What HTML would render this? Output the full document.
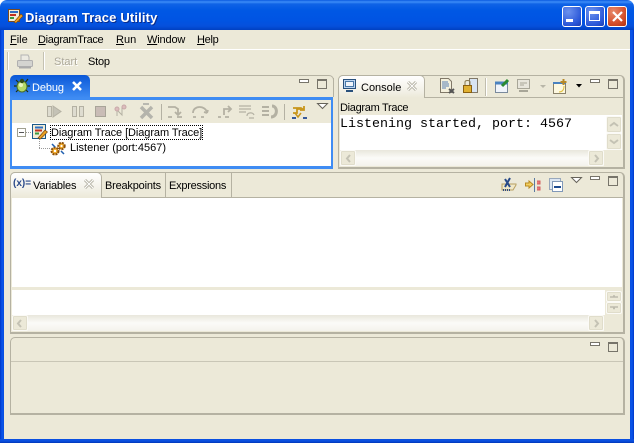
<!DOCTYPE html>
<html><head><meta charset="utf-8"><style>
html,body{margin:0;padding:0}
body{width:634px;height:443px;overflow:hidden;background:#fff;position:relative;font:11px/13px "Liberation Sans",sans-serif;color:#000}
.a,.t{position:absolute}
.t{white-space:nowrap}
u{text-decoration:underline}
.panel{position:absolute;border:2px solid #aca899;border-top-width:1px;border-left-width:1px;box-sizing:border-box;border-radius:5px 5px 0 0;border-color:#b5b2a2;background:#ece9d8}
.w{position:absolute;background:#fff}
.btn{position:absolute;box-sizing:border-box;background:#ece9d8;border:1px solid #fbfaf6;border-radius:2px;box-shadow:0 0 0 1px #e0ddcb inset}
.hs{position:absolute;background:linear-gradient(#e9e7dc,#fbfbf8 50%,#f4f3ec)}
svg{position:absolute;overflow:visible}
.min{position:absolute;width:8px;height:2px;border:1px solid #77746a;background:#fff}
.max{position:absolute;width:8px;height:7px;border:1px solid #77746a;border-top-width:2px}
</style></head><body>
<div class="a" style="left:0;top:30px;width:634px;height:413px;background:#ece9d8"></div>
<!-- window frame -->
<div class="a" style="left:0;top:0;width:634px;height:30px;border-radius:7px 7px 0 0;background:linear-gradient(#0a5ae0 0,#3c8cf8 2px,#0f63e6 4px,#0058e4 10px,#0054e3 20px,#0550dc 26px,#0140c0 30px)"></div>
<div class="a" style="left:0;top:30px;width:4px;height:413px;background:linear-gradient(90deg,#0036c8,#0a55ea 50%,#0a4fe0)"></div>
<div class="a" style="left:630px;top:30px;width:4px;height:413px;background:linear-gradient(90deg,#0a4fe0,#0a55ea 50%,#0036c8)"></div>
<div class="a" style="left:0;top:439px;width:634px;height:4px;background:linear-gradient(#0a4fe0,#0a50e0 50%,#0036b8)"></div>
<div class="t" style="left:25px;top:10px;font:bold 13px/16px 'Liberation Sans',sans-serif;color:#fff;text-shadow:1px 1px 0 #0a2c8c;letter-spacing:.15px">Diagram Trace Utility</div>
<svg style="left:7px;top:8px" width="16" height="16"><rect x="1.5" y="1.5" width="11" height="12" fill="#f3ecd6" stroke="#7a4a20"/><path d="M3 4h8" stroke="#2e6fc0" stroke-width="2"/><path d="M3 7h6" stroke="#c03020" stroke-width="2"/><path d="M3 10h4" stroke="#3a9a40" stroke-width="2"/><path d="M7 14l7-8 2 2-7 7z" fill="#f0a020" stroke="#7a4a10" stroke-width=".6"/></svg>
<!-- caption buttons -->
<div class="a" style="left:562px;top:6px;width:18px;height:19px;border:1px solid #fff;border-radius:3px;background:radial-gradient(circle at 30% 25%,#6c92ee,#2a57d8 70%,#1c3cb0)"><div class="a" style="left:3px;top:12px;width:7px;height:3px;background:#fff"></div></div>
<div class="a" style="left:585px;top:6px;width:18px;height:19px;border:1px solid #fff;border-radius:3px;background:radial-gradient(circle at 30% 25%,#6c92ee,#2a57d8 70%,#1c3cb0)"><div class="a" style="left:3px;top:4px;width:9px;height:6px;border:1px solid #fff;border-top-width:3px"></div></div>
<div class="a" style="left:607px;top:6px;width:18px;height:19px;border:1px solid #fff;border-radius:3px;background:radial-gradient(circle at 30% 25%,#e88a6c,#d4502c 60%,#b03010)"><svg style="left:4px;top:4px" width="11" height="11"><path d="M1 1l9 9M10 1l-9 9" stroke="#fff" stroke-width="2.2"/></svg></div>
<!-- menu -->
<div class="t" style="left:10px;top:34px"><u>F</u>ile</div>
<div class="t" style="left:38px;top:34px;letter-spacing:-.33px"><u>D</u>iagramTrace</div>
<div class="t" style="left:116px;top:34px"><u>R</u>un</div>
<div class="t" style="left:147px;top:34px;letter-spacing:-.15px"><u>W</u>indow</div>
<div class="t" style="left:197px;top:34px;letter-spacing:-.3px"><u>H</u>elp</div>
<div class="a" style="left:4px;top:49px;width:626px;height:1px;background:#fff"></div>
<!-- toolbar -->
<div class="a" style="left:7px;top:52px;width:1px;height:18px;background:#c5c2b2;border-right:1px solid #fff"></div>
<div class="a" style="left:43px;top:52px;width:1px;height:18px;background:#c5c2b2;border-right:1px solid #fff"></div>
<svg style="left:17px;top:54px" width="16" height="15"><path d="M4 6V1h7l1 2v3" fill="#eceae2" stroke="#b4b4b4"/><rect x=".5" y="6.5" width="15" height="6" rx="1" fill="#d4d4d0" stroke="#b0b0b0"/><path d="M2 13.5h12" stroke="#aaa" stroke-width="2"/></svg>
<div class="t" style="left:54px;top:56px;color:#aca899;text-shadow:1px 1px 0 #fff">Start</div>
<div class="t" style="left:88px;top:56px;letter-spacing:-.2px">Stop</div>

<!-- Debug panel -->
<div class="a" style="left:10px;top:97px;width:323px;height:72px;background:#3f8cf3"></div>
<div class="a" style="left:10px;top:75px;width:324px;height:22px;border:1px solid #b5b2a2;border-bottom:0;box-sizing:border-box;border-radius:5px 5px 0 0"></div>
<div class="a" style="left:333px;top:78px;width:1px;height:19px;background:#b5b2a2"></div>
<div class="a" style="left:10px;top:75px;width:80px;height:23px;border-radius:5px 5px 0 0;background:linear-gradient(#0a58d8,#3f8cf3)"></div>
<div class="a" style="left:12px;top:100px;width:319px;height:23px;background:#ece9d8"></div>
<div class="w" style="left:12px;top:123px;width:319px;height:43px"></div>
<svg style="left:14px;top:77px" width="16" height="17"><path d="M2 3l4 4M14 2l-4 5M0 9h4M16 9h-4M2 15l3-3M14 15l-3-3" stroke="#1c3010" stroke-width="1.2"/><ellipse cx="8" cy="9.5" rx="5" ry="5.5" fill="#b4d868" stroke="#4a7028"/><circle cx="7" cy="8" r="2" fill="#e8f4c0"/><circle cx="8" cy="4" r="2.2" fill="#2e4a1c"/></svg>
<div class="t" style="left:32px;top:82px;color:#fff;letter-spacing:-.1px">Debug</div>
<svg style="left:72px;top:81px" width="10" height="10"><path d="M1 1l8 8M9 1l-8 8" stroke="#fff" stroke-width="2.6"/></svg>
<div class="min" style="left:299px;top:79px"></div>
<div class="max" style="left:317px;top:79px"></div>
<!-- debug toolbar -->
<svg style="left:46px;top:103px" width="290" height="18" fill="none" stroke="#b4b1a3">
<rect x="1.5" y="3.5" width="4" height="10" fill="#dedcd0"/><path d="M7 3l8 5.500-8 5.500z" fill="#c4c2b6"/>
<rect x="26.5" y="3.5" width="4" height="10" fill="#dedcd0"/><rect x="33.5" y="3.5" width="4" height="10" fill="#dedcd0"/>
<rect x="49.5" y="3.5" width="10" height="10" fill="#c9bcb6" stroke="#a8a498"/>
<path d="M71 13V7l5 5V4" stroke-width="1"/><circle cx="71" cy="6" r="2" fill="#dcbcbc" stroke="#c8a8a8"/><circle cx="78" cy="4" r="2" fill="#dcbcbc" stroke="#c8a8a8"/>
<path d="M95 4l11 11M106 4L95 15" stroke="#b4b4ac" stroke-width="3.5"/><path d="M97 1h6" stroke="#b8b8b0" stroke-width="2"/>
<path d="M115.500 1v16" stroke="#b4b1a3"/>
<path d="M122 4h7l3 2v5M129 9l3 3 3-3M122 14h4M131 14h5" stroke-width="1.800"/>
<path d="M147 10c0-8 13-8 14 0M161 10l-3-1M161 10l1-3M147 14h3M155 14h3" stroke-width="1.800"/>
<path d="M172 14h3M179 14h4M178 12V6h6M182 3l3 3-3 3" stroke-width="1.800"/>
<path d="M193 3h12M193 6h12M193 9h7M201 13c0-4 6-4 7-1M203 15h5" stroke-width="1.200"/>
<path d="M216 4h7M216 8h7M216 12h7" stroke-width="2"/><path d="M226 3c6 0 6 11-1 11" stroke-width="3"/>
<path d="M238.500 1v16" stroke="#b4b1a3"/>
<path d="M247 5h8l3 2M258 3v4h-4M255 6h-4v4h-4" stroke="#c8961c" stroke-width="1.800"/><path d="M246 15h4M257 15h4" stroke="#375a9c" stroke-width="2"/><path d="M249 10l3 4 3-4" stroke="#c8961c" stroke-width="1.500"/>
</svg>
<svg style="left:317px;top:103px" width="12" height="8"><path d="M.5.5h10L5.500 5.500z" fill="#fff" stroke="#66635a"/></svg>
<!-- tree -->
<div class="a" style="left:17px;top:128px;width:7px;height:7px;border:1px solid #a0a090"></div>
<div class="a" style="left:19px;top:132px;width:5px;height:1px;background:#555"></div>
<div class="a" style="left:26px;top:132px;width:5px;border-top:1px dotted #999"></div>
<div class="a" style="left:39px;top:139px;height:9px;border-left:1px dotted #999"></div>
<div class="a" style="left:39px;top:148px;width:11px;border-top:1px dotted #999"></div>
<svg style="left:31px;top:124px" width="16" height="16"><rect x="1.5" y=".5" width="13" height="14" fill="#f3ecd6" stroke="#1c5a8a"/><path d="M4 3.500h8" stroke="#2e6fc0" stroke-width="2"/><path d="M4 6.500h7" stroke="#c03020" stroke-width="2"/><path d="M4 9.500h4" stroke="#3a9a40" stroke-width="2"/><path d="M7 14l7-8 2.500 2-7 7z" fill="#e8a020" stroke="#6a3a10" stroke-width=".6"/></svg>
<div class="a" style="left:50px;top:125px;width:151px;height:13px;border:1px dotted #000"></div>
<div class="t" style="left:51px;top:127px;letter-spacing:-.08px">Diagram Trace [Diagram Trace]</div>
<svg style="left:50px;top:141px" width="16" height="16"><circle cx="5" cy="10" r="3.500" fill="#f0a828" stroke="#8a5010" stroke-width="2" stroke-dasharray="2 1"/><circle cx="5" cy="10" r="1.200" fill="#fff"/><circle cx="11.500" cy="5" r="3.200" fill="#f0a828" stroke="#8a5010" stroke-width="2" stroke-dasharray="2 1"/><circle cx="11.500" cy="5" r="1.100" fill="#fff"/><path d="M2 3l3 3M14 13l-3-3" stroke="#2060b0" stroke-width="1.500"/></svg>
<div class="t" style="left:70px;top:142px">Listener (port:4567)</div>

<!-- Console panel -->
<div class="panel" style="left:338px;top:75px;width:287px;height:94px"></div>
<div class="a" style="left:339px;top:97px;width:284px;height:1px;background:#b5b2a2"></div>
<div class="a" style="left:338px;top:75px;width:87px;height:23px;box-sizing:border-box;border:1px solid #b5b2a2;border-bottom:0;border-radius:5px 5px 0 0;background:linear-gradient(#fff,#f2f0e6 70%,#ece9d8)"></div>
<svg style="left:343px;top:79px" width="14" height="14"><rect x=".5" y=".5" width="12" height="9" fill="#bcd4f0" stroke="#28507c"/><rect x="2.500" y="2.500" width="8" height="5" fill="#f0f4fa" stroke="#4878a8"/><path d="M3 12h7" stroke="#28507c" stroke-width="2"/></svg>
<div class="t" style="left:361px;top:82px">Console</div>
<svg style="left:407px;top:81px" width="10" height="10"><path d="M1 1l8 8M9 1l-8 8" stroke="#b4b2a4" stroke-width="3"/><path d="M1 1l8 8M9 1l-8 8" stroke="#fff" stroke-width="1"/></svg>
<svg style="left:440px;top:78px" width="180" height="18" fill="none">
<path d="M.5.500h8l3 3v11H.5z" fill="#f4f0dc" stroke="#807868"/><path d="M2 4h6M2 6h7M2 8h7M2 10h4" stroke="#5a80b4"/><path d="M9 11l5 4M14 11l-5 4" stroke="#555" stroke-width="2"/>
<rect x="29.500" y=".5" width="8" height="14" fill="#d8e4f2" stroke="#807868"/><rect x="23.500" y="7.500" width="8" height="7" fill="#e0b030" stroke="#8a6010"/><path d="M25 7V4c0-2 5-2 5 0v3" stroke="#8a7a50"/>
<path d="M45.500 0v18" stroke="#c0bdae"/><path d="M46.500 0v18" stroke="#fff"/>
<rect x="55.500" y="4.500" width="12" height="10" fill="#f0f4fa" stroke="#7a8a9c"/><path d="M55 5h13" stroke="#4a82c0" stroke-width="3"/><path d="M62 8l6-6" stroke="#2a8a30" stroke-width="3"/>
<rect x="77.500" y="1.500" width="12" height="9" fill="#e8e6dc" stroke="#a8a698"/><path d="M80 5h7M80 7h4" stroke="#a8a698"/><path d="M79 13h9" stroke="#a8a698" stroke-width="2"/>
<path d="M100 7h6l-3 3z" fill="#b8b6a8"/>
<rect x="113.500" y="4.500" width="12" height="11" fill="#fdf8e0" stroke="#8a826a"/><path d="M113 5h13" stroke="#4a82c0" stroke-width="2"/><path d="M123.500 1v6M120.500 4h6" stroke="#b88a28" stroke-width="2"/><path d="M119 14c4 0 5-3 5-6" stroke="#e0c040"/>
<path d="M136 6h6l-3 3.500z" fill="#000"/>
</svg>
<div class="min" style="left:590px;top:79px"></div>
<div class="max" style="left:608px;top:79px"></div>
<div class="t" style="left:340px;top:102px;letter-spacing:-.3px">Diagram Trace</div>
<div class="w" style="left:340px;top:115px;width:282px;height:35px"></div>
<div class="t" style="left:340px;top:118px;font:13.33px/14px 'Liberation Mono',monospace">Listening started, port: 4567</div>
<div class="hs" style="left:340px;top:150px;width:264px;height:16px"></div>
<div class="btn" style="left:340px;top:150px;width:16px;height:16px"></div>
<svg style="left:345px;top:154px" width="7" height="9"><path d="M5 1L2 4.500 5 8" fill="none" stroke="#c4c2b4" stroke-width="2"/></svg>
<div class="btn" style="left:588px;top:150px;width:16px;height:16px"></div>
<svg style="left:593px;top:154px" width="7" height="9"><path d="M2 1l3 3.500L2 8" fill="none" stroke="#c4c2b4" stroke-width="2"/></svg>
<div class="btn" style="left:606px;top:116px;width:16px;height:17px"></div>
<div class="btn" style="left:606px;top:133px;width:16px;height:17px"></div>
<svg style="left:609px;top:121px" width="10" height="7"><path d="M1 5l4-3 4 3" fill="none" stroke="#c4c2b4" stroke-width="2"/></svg>
<svg style="left:609px;top:138px" width="10" height="7"><path d="M1 2l4 3 4-3" fill="none" stroke="#c4c2b4" stroke-width="2"/></svg>

<!-- Variables panel -->
<div class="panel" style="left:10px;top:172px;width:615px;height:162px"></div>
<div class="a" style="left:11px;top:197px;width:612px;height:1px;background:#b5b2a2"></div>
<div class="a" style="left:10px;top:172px;width:92px;height:26px;box-sizing:border-box;border:1px solid #b5b2a2;border-bottom:0;border-radius:5px 5px 0 0;background:linear-gradient(#fff,#f2f0e6 70%,#ece9d8)"></div>
<div class="a" style="left:165px;top:173px;width:1px;height:24px;background:#b5b2a2"></div>
<div class="a" style="left:231px;top:173px;width:1px;height:24px;background:#b5b2a2"></div>
<div class="t" style="left:13px;top:177px;font:bold 10px/13px 'Liberation Sans',sans-serif;color:#2a4a8a">(x)=</div>
<div class="t" style="left:33px;top:180px;letter-spacing:-.2px">Variables</div>
<svg style="left:84px;top:179px" width="10" height="10"><path d="M1 1l8 8M9 1l-8 8" stroke="#b4b2a4" stroke-width="3"/><path d="M1 1l8 8M9 1l-8 8" stroke="#fff" stroke-width="1"/></svg>
<div class="t" style="left:105px;top:180px;letter-spacing:-.2px">Breakpoints</div>
<div class="t" style="left:169px;top:180px;letter-spacing:-.25px">Expressions</div>
<svg style="left:501px;top:176px" width="70" height="18" fill="none">
<path d="M1 14h11l3-5V8H1z" fill="#f0e8c8" stroke="#b8a060"/><path d="M4 3l5 8M9 2L4 11" stroke="#284a88" stroke-width="2"/><path d="M2 14h8" stroke="#284a88" stroke-width="2" stroke-dasharray="1 1"/>
<path d="M28 5l4 3.500-4 3.500V10h-3.500V7H28z" fill="#f4d060" stroke="#b88a20"/><path d="M33.500 2v14" stroke="#5a7aa0"/><path d="M36 5h3v3h-3M36 11h3v3h-3" fill="#e87878" stroke="#d06060"/>
<rect x="48.500" y="2.500" width="11" height="11" fill="#dce6f2" stroke="#98a8bc"/><rect x="51.500" y="5.500" width="10" height="10" fill="#fff" stroke="#8098b8"/><path d="M53 11h7" stroke="#1c4a90" stroke-width="2"/>
</svg>
<svg style="left:571px;top:177px" width="12" height="8"><path d="M.5.5h10L5.500 5.500z" fill="#fff" stroke="#66635a"/></svg>
<div class="min" style="left:590px;top:176px"></div>
<div class="max" style="left:608px;top:176px"></div>
<div class="w" style="left:12px;top:198px;width:610px;height:89px"></div>
<div class="w" style="left:12px;top:290px;width:610px;height:26px"></div>
<div class="hs" style="left:12px;top:315px;width:592px;height:16px"></div>
<div class="a" style="left:605px;top:290px;width:17px;height:26px;background:#ece9d8"></div>
<div class="a" style="left:604px;top:315px;width:18px;height:16px;background:#ece9d8"></div>
<div class="btn" style="left:606px;top:291px;width:16px;height:11px"></div>
<div class="btn" style="left:606px;top:302px;width:16px;height:12px"></div>
<svg style="left:609px;top:294px" width="10" height="5"><path d="M1 3h8M4 2h2" stroke="#bdbbad" stroke-width="1.500"/></svg>
<svg style="left:609px;top:306px" width="10" height="5"><path d="M1 1h8M4 2.500h2" stroke="#bdbbad" stroke-width="1.500"/></svg>
<div class="btn" style="left:12px;top:315px;width:16px;height:16px"></div>
<svg style="left:16px;top:319px" width="7" height="9"><path d="M5 1L2 4.500 5 8" fill="none" stroke="#c4c2b4" stroke-width="2"/></svg>
<div class="btn" style="left:588px;top:315px;width:16px;height:16px"></div>
<svg style="left:593px;top:319px" width="7" height="9"><path d="M2 1l3 3.500L2 8" fill="none" stroke="#c4c2b4" stroke-width="2"/></svg>

<!-- bottom panel -->
<div class="panel" style="left:10px;top:337px;width:615px;height:78px"></div>
<div class="a" style="left:11px;top:361px;width:612px;height:1px;background:#c9c6b6"></div>
<div class="min" style="left:590px;top:342px"></div>
<div class="max" style="left:608px;top:342px"></div>
</body></html>
